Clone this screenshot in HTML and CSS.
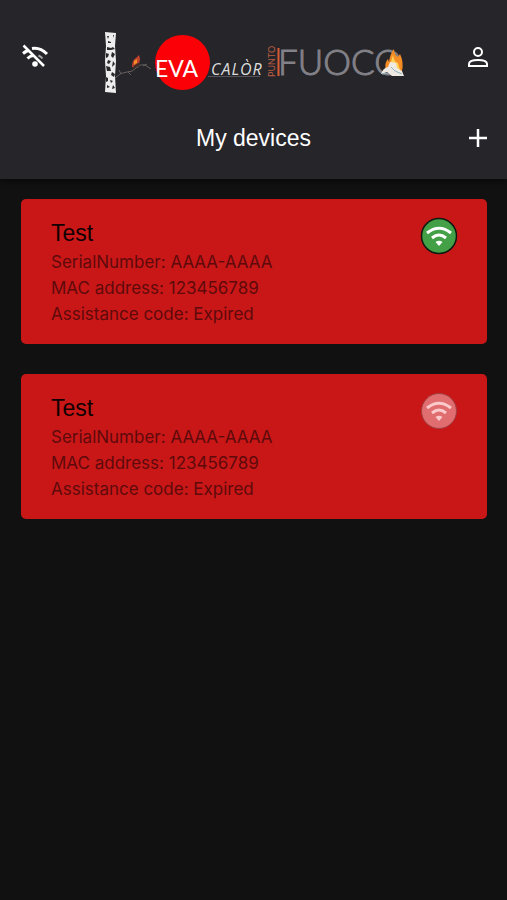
FILE: index.html
```html
<!DOCTYPE html>
<html lang="en">
<head>
<meta charset="utf-8">
<meta name="viewport" content="width=device-width, initial-scale=1">
<title>My devices</title>
<link rel="stylesheet" href="styles.css">
</head>
<body>
<header class="header">
  <div class="bar brand-bar">
    <button class="icon-button" type="button" aria-label="Offline mode">
      <svg width="28" height="28" viewBox="0 0 28 28" fill="none" stroke="#fff" stroke-width="3">
        <path d="M11 5.500Q19 4 26 11"/>
        <path d="M2 10.500Q4.500 8.500 7 7.500M6.500 15.500Q9 13 12 12.500" />
        <path d="M17.500 12.500Q20 13.500 21.500 15.500" stroke="#aaa" stroke-width="2"/>
        <path d="M2.500 2.500L23 23" stroke-width="2.500"/>
        <circle cx="14" cy="21" r="2.800" fill="#fff" stroke="none"/>
      </svg>
    </button>
    <svg class="logo" viewBox="0 0 304 64" role="img" aria-label="Eva Calòr Punto Fuoco">
      <path fill="#eee" d="M3 1L14 2L13 15L14 30L13 45L14 62L3 61L4 45L3 30L4 15Z"/>
      <g fill="#29282b">
        <path d="M5 5l2 0-1 3zM11 4l1 0 0 3zM6 10l3 1 0 1-3 0zM5 16l4 1 2-1 2 2-4 1-4 0zM4 22l3 1-1 3-2 1zM10 21l3 2-2 4-2-2zM6 29l3 1-2 3-2-1zM11 30l2 3-3 3zM4 35l4 1 1 4-4 0zM10 41l3 2-1 3-3-2zM4 46l2 1 0 3-2 1zM8 49l3 1-2 2zM5 54l3 2-3 1zM11 54l2 3-3 1z"/>
      </g>
      <g fill="none" stroke="#66615f" stroke-width="1">
        <path d="M13 47Q19 41 25 41T34 37T43 34L49 38M19 43l-2-4M26 41l3 3M36 37l-1-3M41 35l4-2"/>
      </g>
      <path fill="#c4432c" d="M30 36Q30 29 34 27L37 24L38 28L37 34Q34 37 30 36Z"/>
      <path fill="#ef8c24" d="M32 30L35 28L35 32L32 34Z"/>
      <path fill="#422d29" d="M31 35L38 31L37 35L33 37Z"/>
      <circle cx="80.500" cy="31.500" r="27.500" fill="#fb0006"/>
      <text class="logo-eva" x="53" y="46">EVA</text>
      <text class="logo-calor" x="109" y="44">CALÒR</text>
      <path d="M106 45.500H158" stroke="#55545a"/>
      <text class="logo-punto" transform="translate(173 46) rotate(-90)">PUNTO</text>
      <path d="M176.500 17V45" stroke="#d65a32" stroke-width="2"/>
      <text class="logo-fuoco" x="176" y="44">FUOCO</text>
      <path fill="#f58c24" d="M284 39Q282 32 286 28L287 31Q288 23 292 18Q292 24 296 26L298 23Q302 31 300 40Z"/>
      <path fill="#ffd25a" d="M286 38Q289 32 291 24Q292 31 296 32L298 39Z"/>
      <path fill="#eee9e2" d="M279 43Q281 37 286 36L288 31L294 32L295 37L300 40L302 45H290L285 41Z"/>
      <path fill="none" stroke="#8fb4bd" d="M280 43L286 42M289 36L293 40L300 43"/>
    </svg>
    <button class="icon-button" type="button" aria-label="Account">
      <svg width="28" height="28" viewBox="0 0 28 28" fill="none" stroke="#fff" stroke-width="2">
        <circle cx="14" cy="9" r="4"/>
        <path d="M5 23V21Q5 17 14 17T23 21V23Z"/>
      </svg>
    </button>
  </div>
  <div class="bar title-bar">
    <h1 class="title">My devices</h1>
    <button class="icon-button" type="button" aria-label="Add device">
      <svg width="28" height="28" viewBox="0 0 28 28" stroke="#fff" stroke-width="2.500">
        <path d="M5 14H23M14 5V23"/>
      </svg>
    </button>
  </div>
</header>
<main class="devices">
  <article class="card">
    <div class="details">
      <h2 class="name">Test</h2>
      <p>SerialNumber: AAAA-AAAA</p>
      <p>MAC address: 123456789</p>
      <p>Assistance code: Expired</p>
    </div>
    <svg class="status" viewBox="0 0 38 38" role="img" aria-label="Online">
      <circle cx="19" cy="19" r="17.500" fill="#43a047" stroke="#101a10" stroke-width="1.500"/>
      <g fill="none" stroke="#fff" stroke-width="3">
        <path d="M7 16Q19 6.500 31 16M12 21Q19 15 26 21"/>
      </g>
      <path fill="#fff" d="M15.500 25Q19 22.500 22.500 25L19 29Z"/>
    </svg>
  </article>
  <article class="card">
    <div class="details">
      <h2 class="name">Test</h2>
      <p>SerialNumber: AAAA-AAAA</p>
      <p>MAC address: 123456789</p>
      <p>Assistance code: Expired</p>
    </div>
    <svg class="status" viewBox="0 0 38 38" role="img" aria-label="Offline">
      <circle cx="19" cy="19" r="17.500" fill="#e06d6f" stroke="#9d4044"/>
      <g fill="none" stroke="#fbcaca" stroke-width="3">
        <path d="M7 16Q19 6.500 31 16M12 21Q19 15 26 21"/>
      </g>
      <path fill="#fbcaca" d="M15.500 25Q19 22.500 22.500 25L19 29Z"/>
    </svg>
  </article>
</main>
</body>
</html>
```
FILE: styles.css
```css
* {
  box-sizing: border-box;
}

body {
  margin: 0;
  min-height: 100vh;
  background: #111;
  color: #fff;
  font-family: Inter, "Liberation Sans", sans-serif;
}

h1, h2, p {
  margin: 0;
  font-weight: 400;
}

.header {
  padding: 17px 15px 0;
  background: #26252a;
  box-shadow: 0 2px 6px #080808;
}

.bar {
  display: flex;
  align-items: center;
  justify-content: space-between;
  min-height: 80px;
}

.brand-bar {
  padding-left: 6px;
}

.icon-button {
  display: block;
  width: 28px;
  height: 28px;
  padding: 0;
  border: 0;
  background: none;
}

.icon-button svg {
  display: block;
}

.logo {
  width: 304px;
  height: 64px;
  margin-top: 12px;
  margin-right: 6px;
}

.logo-eva {
  fill: #fff;
  font: 400 23px Lato, sans-serif;
}

.logo-calor {
  fill: #ddd;
  font: italic 400 16px "Open Sans", sans-serif;
  letter-spacing: 1px;
}

.logo-punto {
  fill: #b85d43;
  font: 400 9px Lato, sans-serif;
}

.logo-fuoco {
  fill: #828188;
  stroke: #828188;
  stroke-width: 1px;
  font: 300 35px Lato, sans-serif;
}

.title-bar {
  display: grid;
  grid-template-columns: 1fr auto 1fr;
  min-height: 82px;
}

.title {
  grid-column: 2;
  font-family: "Liberation Sans", sans-serif;
  font-size: 23px;
  line-height: 32px;
}

.title-bar .icon-button {
  justify-self: end;
}

.devices {
  display: grid;
  gap: 30px;
  padding: 20px 20px 20px 21px;
}

.card {
  display: flex;
  align-items: flex-start;
  justify-content: space-between;
  padding: 18px 29px 17px 30px;
  border-radius: 5px;
  background: #c91718;
  color: #5e0a0b;
  font-size: 17px;
  line-height: 26px;
}

.name {
  color: #100000;
  font-family: "Liberation Sans", sans-serif;
  font-size: 23px;
  line-height: 32px;
}

.status {
  width: 38px;
  height: 38px;
}
```
